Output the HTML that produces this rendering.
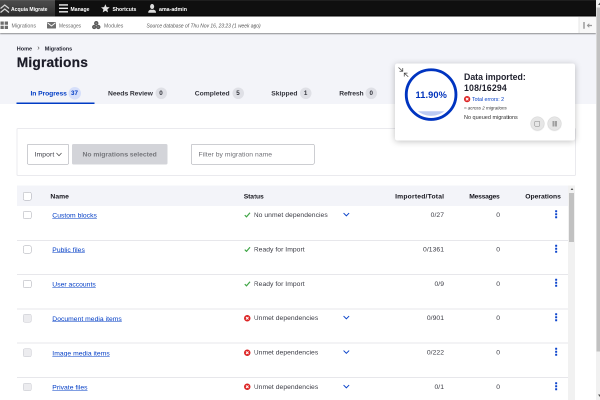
<!DOCTYPE html>
<html lang="en">
<head>
<meta charset="utf-8">
<title>Migrations</title>
<style>
html,body{margin:0;padding:0;width:600px;height:400px;overflow:hidden;background:#e0e0e0;}
#s{position:absolute;left:0;top:0;width:1200px;height:800px;transform:scale(.5);transform-origin:0 0;will-change:transform;font-family:"Liberation Sans",sans-serif;color:#222330;overflow:hidden;}
#s div,#s span,#s a,#s svg{position:absolute;box-sizing:border-box;white-space:nowrap;}
.b{font-weight:bold}
.i{font-style:italic}
.t{font-size:13.5px;line-height:20px;height:20px;color:#3a3b44}
.h{color:#15151d}
.lnk{color:#003cc5;text-decoration:underline;}
.cb{width:16.5px;height:16.5px;border:1.5px solid #a2a4ac;border-radius:3.5px;background:#fff}
.cb.d{background:#ececef;border-color:#c4c5cc}
.hr{left:34px;width:1102px;height:2px;background:#e7e7eb}
.tab{font-size:13.5px;font-weight:bold;line-height:24px;height:24px;color:#33343c}
.pill{background:#dfe0e6;border-radius:12px;height:23px;line-height:23px;font-size:12.5px;font-weight:bold;text-align:center;color:#33343c}
.tb{font-size:11.5px;line-height:20px;font-weight:bold;color:#fff;transform-origin:0 50%}
.tb2{font-size:11px;line-height:20px;color:#6a6a6a;transform-origin:0 50%}
</style>
</head>
<body>
<div id="s">
  <!-- page background -->
  <div style="left:0;top:0;width:1192.5px;height:800px;background:#fff"></div>
  <div style="left:0;top:66px;width:1192.5px;height:142px;background:#f3f4f9"></div>

  <!-- black toolbar -->
  <div style="left:0;top:0;width:1192px;height:33.4px;background:#0f0f0f;border-top:1.6px solid #2c2c2c;border-bottom:2px solid #000"></div>
  <div style="left:0;top:0;width:109.6px;height:33.4px;background:linear-gradient(#4a4a4a,#454545 30%,#2b2b2b);border-top:1.6px solid #626262;border-bottom:1px solid #1a1a1a"></div>
  <svg style="left:0;top:8px" width="19" height="19" viewBox="0 0 19 19"><path d="M1 9 L9.5 2 L18 9 M1 17 L9.5 10 L18 17" fill="none" stroke="#d6d6d6" stroke-width="2.5"/></svg>
  <div class="tb" style="left:22px;top:7.5px;transform:scaleX(.885)">Acquia Migrate</div>
  <svg style="left:117.5px;top:8px" width="18" height="18" viewBox="0 0 18 18"><path d="M0 1.8H18M0 8.7H18M0 15.6H18" stroke="#f0f0f0" stroke-width="2.8"/></svg>
  <div class="tb" style="left:141px;top:7.5px;transform:scaleX(.885)">Manage</div>
  <svg style="left:201.5px;top:7.5px" width="17.5" height="17.5" viewBox="0 0 20 20"><path d="M10 0.5 L12.8 7 L19.8 7.6 L14.5 12.2 L16.1 19.2 L10 15.5 L3.9 19.2 L5.5 12.2 L0.2 7.6 L7.2 7 Z" fill="#e2e2e2"/></svg>
  <div class="tb" style="left:224.8px;top:7.5px;transform:scaleX(.89)">Shortcuts</div>
  <svg style="left:295.5px;top:8px" width="16.5" height="17.5" viewBox="0 0 16 18"><ellipse cx="8" cy="5.2" rx="4.2" ry="5.2" fill="#ddd"/><path d="M0 18 C0 13.5 2 12.5 5.5 11.5 L8 12 L10.5 11.5 C14 12.5 16 13.5 16 18 Z" fill="#ddd"/></svg>
  <div class="tb" style="left:318.4px;top:7.5px;transform:scaleX(.92)">ama-admin</div>

  <!-- white toolbar -->
  <div style="left:0;top:33.4px;width:1191px;height:33.1px;background:#fff;box-shadow:0 1.5px 2.5px .5px rgba(0,0,0,.42)"></div>
  <svg style="left:1px;top:43px" width="15" height="15" viewBox="0 0 15 15"><path d="M0 0h6.6v6.6h-6.6zM8.4 0h6.6v6.6h-6.6zM0 8.4h6.6v6.6h-6.6zM8.4 8.4h6.6v6.6h-6.6z" fill="#6e6e6e"/></svg>
  <div class="tb2" style="left:23px;top:41px;transform:scaleX(.965)">Migrations</div>
  <svg style="left:94px;top:44px" width="18" height="13" viewBox="0 0 18 13"><rect width="18" height="13" rx="1" fill="#6e6e6e"/><path d="M1 1.5 L9 7.8 L17 1.5" fill="none" stroke="#fff" stroke-width="1.7"/></svg>
  <div class="tb2" style="left:118px;top:41px;transform:scaleX(.88)">Messages</div>
  <svg style="left:184px;top:42px" width="17" height="17" viewBox="0 0 17 17"><circle cx="8.5" cy="4.4" r="3.1" fill="#808080" stroke="#585858" stroke-width="2.5"/><circle cx="4.4" cy="12" r="3.1" fill="#808080" stroke="#585858" stroke-width="2.5"/><circle cx="12.6" cy="12" r="3.1" fill="#808080" stroke="#585858" stroke-width="2.5"/></svg>
  <div class="tb2" style="left:208px;top:41px;transform:scaleX(.93)">Modules</div>
  <div class="tb2 i" style="left:292.8px;top:41px;color:#555;transform:scaleX(.893)">Source database of Thu Nov 16, 23:23 (1 week ago)</div>
  <div style="left:1157px;top:34px;width:36px;height:32px;background:#f8f8f8;border-left:2px solid #e6e6e6"></div>
  <svg style="left:1166px;top:43.5px" width="20" height="14" viewBox="0 0 20 14"><path d="M2 0V13.5" stroke="#808080" stroke-width="2.3"/><path d="M8.5 7H18" stroke="#999" stroke-width="2.6" fill="none"/><path d="M7.5 7L12.5 2.2V11.8Z" fill="#999"/></svg>

  <!-- right window edge -->
  <div style="left:1192px;top:0;width:8px;height:800px;background:#f1f1f1"></div>
  <div style="left:1193.2px;top:15px;width:7px;height:687.5px;background:#c1c1c1"></div>
  <svg style="left:1195.5px;top:5px" width="8" height="5" viewBox="0 0 8 5"><path d="M0 5L4 0L8 5Z" fill="#505050"/></svg>
  <svg style="left:1195.5px;top:788.5px" width="8" height="5" viewBox="0 0 8 5"><path d="M0 0L4 5L8 0Z" fill="#505050"/></svg>

  <!-- breadcrumb & title -->
  <div class="b" style="left:33.5px;top:86.5px;font-size:11px;line-height:20px;">Home</div>
  <div style="left:74.5px;top:85px;font-size:15px;line-height:20px;color:#444">›</div>
  <div class="b" style="left:89.6px;top:86.5px;font-size:11px;line-height:20px;letter-spacing:-.1px">Migrations</div>
  <div class="b" style="left:33.5px;top:105px;font-size:27.5px;line-height:40px;letter-spacing:.35px;color:#1c1c28;-webkit-text-stroke:.45px #1c1c28">Migrations</div>

  <!-- tabs -->
  <div class="tab" style="left:61px;top:174.5px;color:#003cc5;letter-spacing:-.15px">In Progress</div>
  <div class="pill" style="left:136.5px;top:173.8px;width:25px;height:25px;line-height:25px;border-radius:13px;background:#d6dffa;color:#003cc5">37</div>
  <div style="left:33px;top:205px;width:156px;height:3px;background:#003cc5"></div>
  <div class="tab" style="left:216px;top:174.5px;letter-spacing:-.1px">Needs Review</div>
  <div class="pill" style="left:310.5px;top:175px;width:23px">0</div>
  <div class="tab" style="left:389.4px;top:174.5px">Completed</div>
  <div class="pill" style="left:464.5px;top:175px;width:23px">5</div>
  <div class="tab" style="left:542.6px;top:174.5px">Skipped</div>
  <div class="pill" style="left:599.7px;top:175px;width:23px">1</div>
  <div class="tab" style="left:678.6px;top:174.5px;letter-spacing:-.25px">Refresh</div>
  <div class="pill" style="left:731px;top:175px;width:23px">0</div>

  <!-- filter box -->
  <div style="left:33px;top:255.5px;width:1118.5px;height:96px;border:2px solid #eaeaee;border-radius:3px;background:#fff"></div>
  <div style="left:54px;top:288px;width:84px;height:41px;border:1.5px solid #9a9ca5;border-radius:3px;background:#fff"></div>
  <div class="t" style="left:69px;top:299px;letter-spacing:.25px">Import</div>
  <svg style="left:111.5px;top:304.5px" width="12" height="8" viewBox="0 0 12 8"><path d="M1 1L6 6.5L11 1" fill="none" stroke="#444" stroke-width="1.4"/></svg>
  <div style="left:144px;top:288px;width:191px;height:41px;border-radius:3px;background:#d3d4d9"></div>
  <div class="t b" style="left:165px;top:299px;color:#75767b">No migrations selected</div>
  <div style="left:382px;top:288px;width:247px;height:41px;border:1.5px solid #9a9ca5;border-radius:3px;background:#fff"></div>
  <div class="t" style="left:397px;top:299px;color:#6f7076;letter-spacing:.1px">Filter by migration name</div>

  <!-- table header -->
  <div style="left:34px;top:371px;width:1102px;height:40.5px;background:#f3f4f9"></div>
  <div class="cb" style="left:46.3px;top:384px"></div>
  <div class="t b h" style="left:100.8px;top:382.6px;letter-spacing:.1px">Name</div>
  <div class="t b h" style="left:487.5px;top:382.6px;letter-spacing:-.25px">Status</div>
  <div class="t b h" style="left:690px;width:198.5px;text-align:right;top:382.6px;letter-spacing:.4px">Imported/Total</div>
  <div class="t b h" style="left:800px;width:199px;text-align:right;top:382.6px;letter-spacing:-.5px">Messages</div>
  <div class="t b h" style="left:1050.5px;top:382.6px;">Operations</div>

  <!-- inner scrollbar -->
  <div style="left:1136px;top:371px;width:13.5px;height:429px;background:#f1f1f1"></div>
  <div style="left:1138px;top:386px;width:10px;height:98px;background:#c1c1c1"></div>
  <svg style="left:1141px;top:376px" width="6" height="4" viewBox="0 0 8 6"><path d="M0 6L4 0L8 6Z" fill="#505050"/></svg>

  <!-- floating card -->
  <div style="left:790px;top:126.5px;width:359.5px;height:154px;background:#fff;border-radius:4.5px;box-shadow:0 2px 14px rgba(0,0,0,.25)"></div>
  <svg style="left:796px;top:133px" width="24" height="24" viewBox="0 0 24 24"><path d="M1 2L9.2 9.2M9.5 3V9.5H3M20.5 20.5L12.8 13.5M19 13.2H12.5V20" fill="none" stroke="#444" stroke-width="1.5"/></svg>
  <svg style="left:808px;top:135px" width="109" height="109" viewBox="0 0 109 109">
    <defs><clipPath id="cc"><circle cx="54.2" cy="54.2" r="42.6"/></clipPath></defs>
    <rect x="0" y="87.5" width="109" height="22" fill="#bccbf3" clip-path="url(#cc)"/>
    <circle cx="54.2" cy="54.2" r="49.7" fill="none" stroke="#0034c0" stroke-width="5.7"/>
  </svg>
  <div class="b" style="left:831px;top:176px;font-size:18.5px;line-height:28px;color:#0033bb;letter-spacing:.22px">11.90%</div>
  <div class="b" style="left:928px;top:140.5px;font-size:17.5px;line-height:26px;">Data imported:</div>
  <div class="b" style="left:928px;top:162.5px;font-size:17.5px;line-height:26px;letter-spacing:.35px">108/16294</div>
  <svg style="left:928px;top:192px" width="12.5" height="12.5" viewBox="0 0 12 12"><circle cx="6" cy="6" r="6" fill="#dc2323"/><path d="M3.6 3.6L8.4 8.4M8.4 3.6L3.6 8.4" stroke="#fff" stroke-width="1.8"/></svg>
  <div style="left:944px;top:188px;font-size:10.5px;line-height:20px;color:#003cc5">Total errors: 2</div>
  <div class="i" style="left:928px;top:206.5px;font-size:9px;line-height:18px;color:#333">≈ across 2 migrations</div>
  <div style="left:928px;top:223.5px;font-size:11px;line-height:20px;color:#333">No queued migrations</div>
  <div style="left:1060.6px;top:233.2px;width:28px;height:28px;border-radius:50%;background:#e6e6e6;border:1px solid #d6d6d6;box-shadow:0 1px 2px rgba(0,0,0,.12)"></div>
  <div style="left:1069px;top:241.7px;width:11.4px;height:11.4px;border:1.4px solid #858585;border-radius:2px"></div>
  <div style="left:1095.4px;top:233.2px;width:28px;height:28px;border-radius:50%;background:#e6e6e6;border:1px solid #d6d6d6;box-shadow:0 1px 2px rgba(0,0,0,.12)"></div>
  <div style="left:1105.4px;top:242px;width:3.2px;height:10.6px;background:#a0a0a0"></div>
  <div style="left:1110.4px;top:242px;width:3.2px;height:10.6px;background:#a0a0a0"></div>

  <!-- rows -->
  <div class="cb" style="left:46.3px;top:421.9px"></div>
  <a class="t lnk" style="left:104.6px;top:421.4px;letter-spacing:.05px">Custom blocks</a>
  <svg style="left:487.5px;top:423.9px" width="13.5" height="11.5" viewBox="0 0 12 11"><path d="M1 6L4.3 9.3L11 1.5" fill="none" stroke="#3fa545" stroke-width="2.3"/></svg>
  <div class="t" style="left:507.5px;top:419.9px;letter-spacing:.08px">No unmet dependencies</div>
  <svg style="left:685.5px;top:424.9px" width="13.4" height="8.6" viewBox="0 0 14 9"><path d="M1.2 1.2L7 7L12.8 1.2" fill="none" stroke="#0a43c9" stroke-width="2.1"/></svg>
  <div class="t" style="left:760px;width:128px;text-align:right;top:419.9px;letter-spacing:.1px">0/27</div>
  <div class="t" style="left:960px;width:40px;text-align:right;top:419.9px">0</div>
  <svg style="left:1109.8px;top:419.8px" width="5" height="18" viewBox="0 0 5 18"><rect x="0.3" y="0.4" width="4" height="4" rx=".6" fill="#0d45cc"/><rect x="0.3" y="6.5" width="4" height="4" rx=".6" fill="#0d45cc"/><rect x="0.3" y="12.6" width="4" height="4" rx=".6" fill="#0d45cc"/></svg>
  <div class="hr" style="top:479.5px"></div>
  <div class="cb" style="left:46.3px;top:490.7px"></div>
  <a class="t lnk" style="left:104.6px;top:490.2px;letter-spacing:.05px">Public files</a>
  <svg style="left:487.5px;top:492.7px" width="13.5" height="11.5" viewBox="0 0 12 11"><path d="M1 6L4.3 9.3L11 1.5" fill="none" stroke="#3fa545" stroke-width="2.3"/></svg>
  <div class="t" style="left:507.5px;top:488.7px;letter-spacing:.08px">Ready for Import</div>
  <div class="t" style="left:760px;width:128px;text-align:right;top:488.7px;letter-spacing:.1px">0/1361</div>
  <div class="t" style="left:960px;width:40px;text-align:right;top:488.7px">0</div>
  <svg style="left:1109.8px;top:488.6px" width="5" height="18" viewBox="0 0 5 18"><rect x="0.3" y="0.4" width="4" height="4" rx=".6" fill="#0d45cc"/><rect x="0.3" y="6.5" width="4" height="4" rx=".6" fill="#0d45cc"/><rect x="0.3" y="12.6" width="4" height="4" rx=".6" fill="#0d45cc"/></svg>
  <div class="hr" style="top:548.1px"></div>
  <div class="cb" style="left:46.3px;top:559.5px"></div>
  <a class="t lnk" style="left:104.6px;top:559.0px;letter-spacing:.05px">User accounts</a>
  <svg style="left:487.5px;top:561.5px" width="13.5" height="11.5" viewBox="0 0 12 11"><path d="M1 6L4.3 9.3L11 1.5" fill="none" stroke="#3fa545" stroke-width="2.3"/></svg>
  <div class="t" style="left:507.5px;top:557.5px;letter-spacing:.08px">Ready for Import</div>
  <div class="t" style="left:760px;width:128px;text-align:right;top:557.5px;letter-spacing:.1px">0/9</div>
  <div class="t" style="left:960px;width:40px;text-align:right;top:557.5px">0</div>
  <svg style="left:1109.8px;top:557.4px" width="5" height="18" viewBox="0 0 5 18"><rect x="0.3" y="0.4" width="4" height="4" rx=".6" fill="#0d45cc"/><rect x="0.3" y="6.5" width="4" height="4" rx=".6" fill="#0d45cc"/><rect x="0.3" y="12.6" width="4" height="4" rx=".6" fill="#0d45cc"/></svg>
  <div class="hr" style="top:616.7px"></div>
  <div class="cb d" style="left:46.3px;top:628.3px"></div>
  <a class="t lnk" style="left:104.6px;top:627.8px;letter-spacing:.05px">Document media items</a>
  <svg style="left:487.5px;top:629.8px" width="13" height="13" viewBox="0 0 12 12"><circle cx="6" cy="6" r="6" fill="#dc2323"/><path d="M3.7 3.7L8.3 8.3M8.3 3.7L3.7 8.3" stroke="#fff" stroke-width="1.8"/></svg>
  <div class="t" style="left:507.5px;top:626.3px;letter-spacing:.08px">Unmet dependencies</div>
  <svg style="left:685.5px;top:631.3px" width="13.4" height="8.6" viewBox="0 0 14 9"><path d="M1.2 1.2L7 7L12.8 1.2" fill="none" stroke="#0a43c9" stroke-width="2.1"/></svg>
  <div class="t" style="left:760px;width:128px;text-align:right;top:626.3px;letter-spacing:.1px">0/901</div>
  <div class="t" style="left:960px;width:40px;text-align:right;top:626.3px">0</div>
  <svg style="left:1109.8px;top:626.2px" width="5" height="18" viewBox="0 0 5 18"><rect x="0.3" y="0.4" width="4" height="4" rx=".6" fill="#0d45cc"/><rect x="0.3" y="6.5" width="4" height="4" rx=".6" fill="#0d45cc"/><rect x="0.3" y="12.6" width="4" height="4" rx=".6" fill="#0d45cc"/></svg>
  <div class="hr" style="top:685.3px"></div>
  <div class="cb d" style="left:46.3px;top:697.1px"></div>
  <a class="t lnk" style="left:104.6px;top:696.6px;letter-spacing:.05px">Image media items</a>
  <svg style="left:487.5px;top:698.6px" width="13" height="13" viewBox="0 0 12 12"><circle cx="6" cy="6" r="6" fill="#dc2323"/><path d="M3.7 3.7L8.3 8.3M8.3 3.7L3.7 8.3" stroke="#fff" stroke-width="1.8"/></svg>
  <div class="t" style="left:507.5px;top:695.1px;letter-spacing:.08px">Unmet dependencies</div>
  <svg style="left:685.5px;top:700.1px" width="13.4" height="8.6" viewBox="0 0 14 9"><path d="M1.2 1.2L7 7L12.8 1.2" fill="none" stroke="#0a43c9" stroke-width="2.1"/></svg>
  <div class="t" style="left:760px;width:128px;text-align:right;top:695.1px;letter-spacing:.1px">0/222</div>
  <div class="t" style="left:960px;width:40px;text-align:right;top:695.1px">0</div>
  <svg style="left:1109.8px;top:695.0px" width="5" height="18" viewBox="0 0 5 18"><rect x="0.3" y="0.4" width="4" height="4" rx=".6" fill="#0d45cc"/><rect x="0.3" y="6.5" width="4" height="4" rx=".6" fill="#0d45cc"/><rect x="0.3" y="12.6" width="4" height="4" rx=".6" fill="#0d45cc"/></svg>
  <div class="hr" style="top:753.9px"></div>
  <div class="cb d" style="left:46.3px;top:765.9px"></div>
  <a class="t lnk" style="left:104.6px;top:765.4px;letter-spacing:.05px">Private files</a>
  <svg style="left:487.5px;top:767.4px" width="13" height="13" viewBox="0 0 12 12"><circle cx="6" cy="6" r="6" fill="#dc2323"/><path d="M3.7 3.7L8.3 8.3M8.3 3.7L3.7 8.3" stroke="#fff" stroke-width="1.8"/></svg>
  <div class="t" style="left:507.5px;top:763.9px;letter-spacing:.08px">Unmet dependencies</div>
  <svg style="left:685.5px;top:768.9px" width="13.4" height="8.6" viewBox="0 0 14 9"><path d="M1.2 1.2L7 7L12.8 1.2" fill="none" stroke="#0a43c9" stroke-width="2.1"/></svg>
  <div class="t" style="left:760px;width:128px;text-align:right;top:763.9px;letter-spacing:.1px">0/1</div>
  <div class="t" style="left:960px;width:40px;text-align:right;top:763.9px">0</div>
  <svg style="left:1109.8px;top:763.8px" width="5" height="18" viewBox="0 0 5 18"><rect x="0.3" y="0.4" width="4" height="4" rx=".6" fill="#0d45cc"/><rect x="0.3" y="6.5" width="4" height="4" rx=".6" fill="#0d45cc"/><rect x="0.3" y="12.6" width="4" height="4" rx=".6" fill="#0d45cc"/></svg>
  <div class="hr" style="top:822.5px"></div>
</div>
</body>
</html>
